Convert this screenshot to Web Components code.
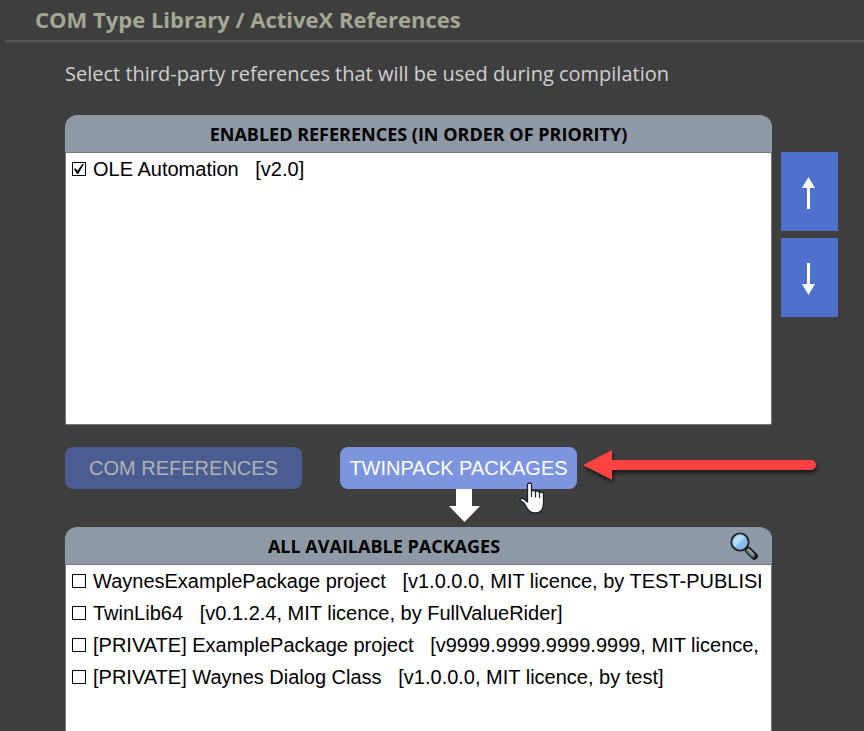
<!DOCTYPE html>
<html lang="en">
<head>
<meta charset="utf-8">
<meta name="viewport" content="width=device-width, initial-scale=1">
<title>COM Type Library / ActiveX References</title>
<style>
  html { background: #3f3f3f; }
  body { margin: 0; }
</style>
</head>
<body>
<references-page></references-page>

<script>
const define = (name, html, setup) => {
  const template = document.createElement('template');
  template.innerHTML = html;
  customElements.define(name, class extends HTMLElement {
    constructor() {
      super();
      this.attachShadow({ mode: 'open' }).append(template.content.cloneNode(true));
    }
    connectedCallback() { if (setup) setup(this, this.shadowRoot); }
  });
};

define('section-heading', `
  <style>
    :host { display: block; margin-left: 5px; padding: 4px 0 6px 30px; border-bottom: 2px solid #565656; }
    h1 { margin: 0; font: bold 22px/30px "Open Sans", "Noto Sans", sans-serif; color: #a3a793; white-space: nowrap; }
  </style>
  <h1><slot></slot></h1>`);

define('reference-item', `
  <style>
    :host { display: block; overflow: hidden; }
    label { display: flex; align-items: center; gap: 7px; font: 20px/32px "Liberation Sans", Arial, sans-serif; color: #000; white-space: pre; }
    input { appearance: none; flex: none; display: grid; place-items: center; width: 14px; height: 14px; margin: 0; border: 1px solid #000; background: #fff; }
    input:checked::before { content: ""; width: 10px; height: 10px; background: #000; clip-path: polygon(0 50%, 16% 42%, 34% 68%, 84% 0, 100% 0, 42% 100%, 30% 100%); }
  </style>
  <label><input type="checkbox"><span><slot></slot></span></label>`,
  (host, root) => { root.querySelector('input').checked = host.hasAttribute('checked'); });

define('reference-panel', `
  <style>
    :host { display: flex; flex-direction: column; min-width: 0; }
    header { display: flex; align-items: center; height: 37px; border-radius: 12px 12px 0 0; background: #8f99a5; }
    h2 { flex: 1; margin: 0; padding-top: 2px; text-align: center; font: bold 18px/35px "Open Sans", "Noto Sans", sans-serif; color: #000; white-space: nowrap; }
    .list { flex: 1; box-sizing: border-box; min-height: var(--list-height, 160px); padding: 0 10px 0 6px; border: 1px solid #77777a; border-radius: 0 0 2px 2px; background: #fff; }
    :host([open-ended]) .list { border-bottom: 0; border-radius: 0; }
  </style>
  <header><h2><slot name="title"></slot></h2><slot name="action"></slot></header>
  <div class="list"><slot></slot></div>`);

define('search-button', `
  <style>
    :host { display: block; padding-left: 27px; padding-right: 14px; }
    button { display: block; width: 28px; height: 28px; padding: 0; border: 0; background: none; }
    svg { display: block; }
  </style>
  <button type="button" aria-label="Search packages">
    <svg width="28" height="28" viewBox="0 0 28 28" fill="none" stroke-linecap="round">
      <path d="M15 15 19 19" stroke="#202426" stroke-width="3.500"/>
      <path d="M18.500 18.500 24.300 24.300" stroke="#171b1c" stroke-width="7"/>
      <path d="M18.200 18.500 23 23.300" stroke="#6b7673" stroke-width="4"/>
      <path d="M18.500 17.500 23 22" stroke="#98a3a5" stroke-width="1.800"/>
      <circle cx="10" cy="10" r="8.500" fill="#84c0ef" stroke="#202426" stroke-width="2.200"/>
      <path d="M4.700 15.300A7.300 7.300 0 0 1 15.300 4.700Z" fill="#b8ddf8"/>
      <circle cx="10" cy="10" r="7.200" stroke="#8fa9b8" stroke-width=".8"/>
    </svg>
  </button>`);

define('move-button', `
  <style>
    :host { display: block; }
    button { display: grid; place-items: center; width: 100%; height: 79px; padding: 3px 2px 0 0; border: 0; background: #4f71cd; }
    svg { display: block; }
    :host([direction="down"]) svg { transform: rotate(180deg); }
  </style>
  <button type="button"><svg width="13" height="32" viewBox="0 0 13 32"><path d="M6.500 0 13 11H8V32H5V11H0Z" fill="#fff"/></svg></button>`,
  (host, root) => root.querySelector('button').setAttribute('aria-label', 'Move ' + host.getAttribute('direction')));

define('source-button', `
  <style>
    :host { display: block; position: relative; flex: 0 1 237px; }
    button { width: 100%; height: 42px; padding: 0; border: 0; border-radius: 8px; background: #4a5d93; color: #b1b1b1; font: 20px/42px "Liberation Sans", Arial, sans-serif; white-space: nowrap; }
    :host([active]) button { background: #7d95df; color: #fff; }
  </style>
  <button type="button"><slot></slot></button><slot name="overlay"></slot>`,
  (host, root) => root.querySelector('button').setAttribute('aria-pressed', host.hasAttribute('active')));

define('selection-arrow', `
  <style>:host { position: absolute; top: 42px; left: 109px; } svg { display: block; }</style>
  <svg width="31" height="33" viewBox="0 0 31 33"><path d="M7 0H23V17H31L15.500 33 0 17H7Z" fill="#fff"/></svg>`);

define('hand-cursor', `
  <style>:host { position: absolute; top: 35px; right: 32px; pointer-events: none; } svg { display: block; }</style>
  <svg width="26" height="32" viewBox="0 0 26 32"><path d="M8.500 20V3Q8.500 1 10.500 1T12.500 3V9.500Q13 8.300 14.700 8.500T16.500 10Q17 8.700 18.600 9T20.500 11Q21 9.800 22.700 10.200T24.500 12.500V21Q24.500 31 16 31Q11.500 31 9 27.500L5 21 1.500 18.500Q.5 17 2 16.500Q4 16 8.500 20Z" fill="#fff" stroke="#1d2030" stroke-width="1.300" stroke-linejoin="round"/><path d="M12.500 9V15M16.500 10V15.500M20.500 11V16" stroke="#1d2030" stroke-width="1.200"/></svg>`);

define('callout-arrow', `
  <style>:host { display: block; flex: none; } svg { display: block; overflow: visible; filter: drop-shadow(1px 3px 2px #0009); }</style>
  <svg width="233" height="30" viewBox="0 0 233 30"><path d="M0 15 29 0V10H228A5 5 0 0 1 228 20H29V30Z" fill="#ff4343"/></svg>`);

define('references-page', `
  <style>
    :host { display: flex; flex-direction: column; min-height: 100vh; }
    main { flex: 1; display: grid; grid-template-columns: minmax(0, 1fr) 57px; grid-template-rows: auto auto auto 1fr; column-gap: 9px; padding: 16px 26px 0 65px; }
    p { grid-column: 1 / -1; margin: 0; padding-bottom: 26px; font: 20px/31px "Open Sans", "Noto Sans", sans-serif; color: #d0d0d0; white-space: nowrap; }
    .order { display: grid; align-content: start; gap: 7px; padding-top: 37px; }
    .sources { grid-column: 1 / -1; display: flex; align-items: center; padding: 22px 0 38px; }
    .sources source-button + source-button { margin-left: 38px; }
    callout-arrow { margin-left: 6px; margin-top: -6px; }
    .enabled { --list-height: 273px; }
  </style>
  <section-heading>COM Type Library / ActiveX References</section-heading>
  <main>
    <p>Select third-party references that will be used during compilation</p>
    <reference-panel class="enabled">
      <span slot="title">ENABLED REFERENCES (IN ORDER OF PRIORITY)</span>
      <reference-item checked>OLE Automation   [v2.0]</reference-item>
    </reference-panel>
    <div class="order">
      <move-button direction="up"></move-button>
      <move-button direction="down"></move-button>
    </div>
    <div class="sources">
      <source-button>COM REFERENCES</source-button>
      <source-button active>TWINPACK PACKAGES
        <selection-arrow slot="overlay"></selection-arrow>
        <hand-cursor slot="overlay"></hand-cursor>
      </source-button>
      <callout-arrow></callout-arrow>
    </div>
    <reference-panel open-ended>
      <span slot="title">ALL AVAILABLE PACKAGES</span>
      <search-button slot="action"></search-button>
      <reference-item>WaynesExamplePackage project   [v1.0.0.0, MIT licence, by TEST-PUBLISH</reference-item>
      <reference-item>TwinLib64   [v0.1.2.4, MIT licence, by FullValueRider]</reference-item>
      <reference-item>[PRIVATE] ExamplePackage project   [v9999.9999.9999.9999, MIT licence,</reference-item>
      <reference-item>[PRIVATE] Waynes Dialog Class   [v1.0.0.0, MIT licence, by test]</reference-item>
    </reference-panel>
  </main>`);
</script>
</body>
</html>
